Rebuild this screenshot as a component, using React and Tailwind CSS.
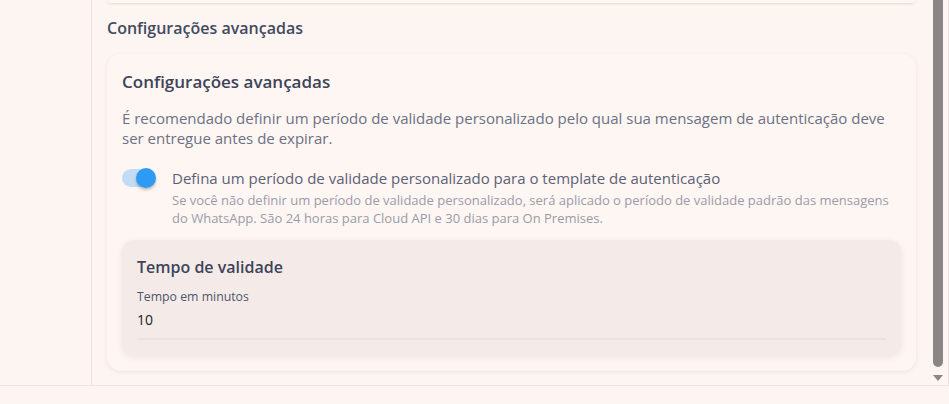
import { useState } from 'react'

export default function App() {
  const [custom, setCustom] = useState(true)

  return (
    <div
      className="flex h-[404px] w-[949px] flex-col overflow-hidden bg-[#fdf5f2] text-[#3d4459]"
      style={{ fontFamily: '"Open Sans", "Noto Sans", sans-serif' }}
    >
      <div className="flex h-[386px] border-b border-[#eee3e0]">
        <aside className="w-[92px] shrink-0 border-r border-[#eee3e0]" />

        <main className="flex min-w-0 flex-1 flex-col pl-[15px] pr-[14px]">
          <div className="mx-[1px] h-[3px] rounded-b-xl bg-[#fef6f3] shadow-[0_1px_3px_rgba(120,90,80,0.18)]" />

          <h2 className="mt-[14px] text-[16px] font-semibold leading-[22px] text-[#434a5e]">Configurações avançadas</h2>

          <section className="mt-[15px] rounded-[14px] bg-[#fef6f3] px-[15px] pb-[16px] pt-[16px] shadow-[0_1px_4px_rgba(120,90,80,0.12)]">
            <h3 className="text-[17px] font-semibold leading-[24px]">Configurações avançadas</h3>
            <p className="mt-[14px] text-[15px] leading-[20px] text-[#6c7184]">
              É recomendado definir um período de validade personalizado pelo qual sua mensagem de autenticação deve
              ser entregue antes de expirar.
            </p>

            <div className="mt-[19px] flex items-start">
              <button
                type="button"
                onClick={() => setCustom((v) => !v)}
                className={[
                  'relative mt-[2px] h-[18px] w-[29px] shrink-0 rounded-full',
                  custom ? 'bg-[#c3dcf3]' : 'bg-[#d9d2cf]',
                ].join(' ')}
              >
                <span
                  className={[
                    'absolute top-[-1px] h-[20px] w-[20px] rounded-full shadow-[0_2px_3px_rgba(0,0,0,0.25)]',
                    custom ? 'left-[14px] bg-[#2d9bf3]' : 'left-[-2px] bg-white',
                  ].join(' ')}
                />
              </button>
              <div className="ml-[21px]">
                <div className="text-[15px] leading-[22px] text-[#5c6175]">
                  Defina um período de validade personalizado para o template de autenticação
                </div>
                <div className="mt-[2px] text-[13px] leading-[18px] text-[#9b9ba7]">
                  Se você não definir um período de validade personalizado, será aplicado o período de validade padrão das mensagens
                  <br />
                  do WhatsApp. São 24 horas para Cloud API e 30 dias para On Premises.
                </div>
              </div>
            </div>

            <div className="mt-[13px] rounded-[12px] bg-[#f4ebe9] px-[15px] pb-[15px] pt-[15px] shadow-[0_2px_6px_rgba(120,90,80,0.12)]">
              <h4 className="text-[16px] font-semibold leading-[24px]">Tempo de validade</h4>
              <label className="mt-[10px] block text-[12.3px] leading-[16px] text-[#4f5568]">Tempo em minutos</label>
              <div className="border-b-2 border-[#ebe1de] pb-[8px] pt-[5px] text-[14px] leading-[20px] text-[#222]">10</div>
            </div>
          </section>
        </main>

        <div className="relative w-[19px] shrink-0 border-r border-[#eee3e0]">
          <div className="absolute left-[3px] top-0 h-[367px] w-[10px] rounded-b-full bg-[#8b8685]" />
          <div className="absolute left-[3px] top-[375px] h-0 w-0 border-x-[5px] border-t-[6px] border-x-transparent border-t-[#8b8685]" />
        </div>
      </div>
      <div className="flex-1" />
    </div>
  )
}
